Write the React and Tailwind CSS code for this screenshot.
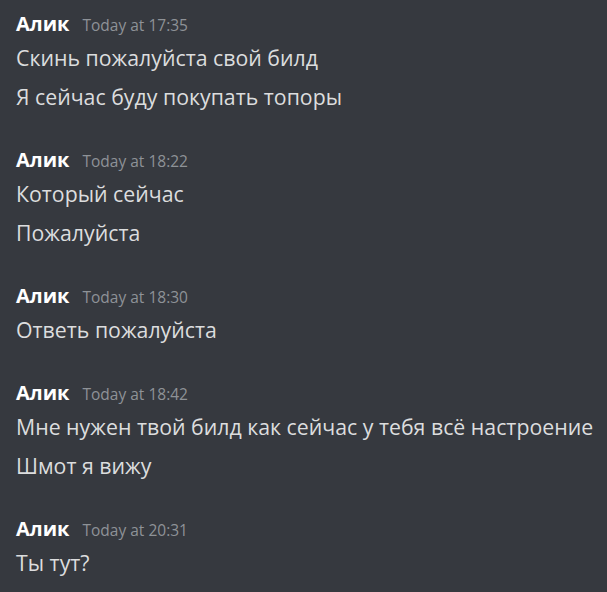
import React from 'react';

const messages = [
  { time: 'Today at 17:35', lines: ['Скинь пожалуйста свой билд', 'Я сейчас буду покупать топоры'] },
  { time: 'Today at 18:22', lines: ['Который сейчас', 'Пожалуйста'] },
  { time: 'Today at 18:30', lines: ['Ответь пожалуйста'] },
  { time: 'Today at 18:42', lines: ['Мне нужен твой билд как сейчас у тебя всё настроение', 'Шмот я вижу'] },
  { time: 'Today at 20:31', lines: ['Ты тут?'] },
];

const MessageGroup = ({ time, lines }) => (
  <div className="mb-[30px]">
    <div className="flex items-baseline gap-[13px] h-[28px] leading-[28px]">
      <span className="text-[20px] font-bold text-white">Алик</span>
      <span className="text-[15.5px] text-[#8e9297]">{time}</span>
    </div>
    {lines.map((line) => (
      <div key={line} className="h-[39px] leading-[39px] text-[21.3px] text-[#dcddde]">
        {line}
      </div>
    ))}
  </div>
);

const App = () => {
  return (
    <div
      className="w-[607px] h-[592px] overflow-hidden bg-[#36393f] pl-[16px] pt-[10px]"
      style={{ fontFamily: '"Open Sans", "Noto Sans", sans-serif' }}
    >
      {messages.map((m) => (
        <MessageGroup key={m.time} time={m.time} lines={m.lines} />
      ))}
    </div>
  );
};

export default App;
